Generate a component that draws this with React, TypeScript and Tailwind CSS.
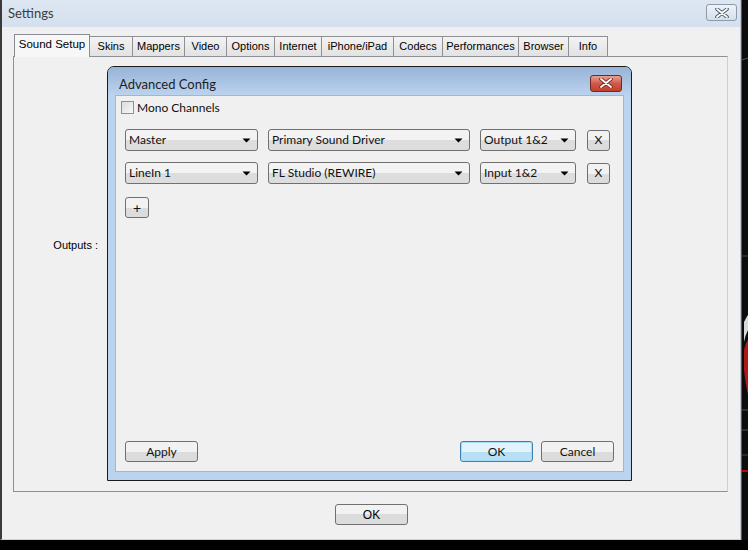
import React from "react";

const tahoma = { fontFamily: '"Liberation Sans", Arial, sans-serif' };
const segoe = { fontFamily: 'Lato, "Liberation Sans", sans-serif' };

const tabs: { label: string; w: string }[] = [
  { label: "Skins", w: "w-[43px]" },
  { label: "Mappers", w: "w-[52px]" },
  { label: "Video", w: "w-[42px]" },
  { label: "Options", w: "w-[48px]" },
  { label: "Internet", w: "w-[47px]" },
  { label: "iPhone/iPad", w: "w-[72px]" },
  { label: "Codecs", w: "w-[49px]" },
  { label: "Performances", w: "w-[76px]" },
  { label: "Browser", w: "w-[50px]" },
  { label: "Info", w: "w-[39px]" },
];

function Arrow() {
  return (
    <svg width="9" height="5" viewBox="0 0 9 5" className="shrink-0">
      <path d="M0.5 0.5 L8.5 0.5 L4.5 4.5 Z" fill="#000" />
    </svg>
  );
}

function Combo({ label, w }: { label: string; w: string }) {
  return (
    <div
      className={`${w} h-[22px] rounded-[3px] border border-[#707070] bg-gradient-to-b from-[#f3f3f3] from-50% to-[#dddddd] to-50% flex items-center pl-[3px] pr-[6px] text-[12px] text-[#111]`}
      style={segoe}
    >
      <span className="flex-1 leading-none">{label}</span>
      <Arrow />
    </div>
  );
}

function Btn({ label, className = "" }: { label: string; className?: string }) {
  return (
    <div
      className={`h-[21px] rounded-[3px] border border-[#707070] bg-gradient-to-b from-[#f2f2f2] from-50% to-[#dcdcdc] to-50% flex items-center justify-center text-[12px] text-[#111] ${className}`}
      style={segoe}
    >
      {label}
    </div>
  );
}

export default function App() {
  return (
    <div className="w-[748px] h-[550px] bg-black flex overflow-hidden">
      {/* Settings window */}
      <div className="w-[741px] h-[540px] shrink-0 border-l-2 border-l-[#3a3a3a] border-r border-r-[#bfc8d2] border-b border-b-[#c7d2de] bg-[#f0f0f0] flex flex-col">
        {/* Title bar */}
        <div className="h-[27px] shrink-0 bg-gradient-to-b from-[#dde7f2] to-[#d4e0ee] flex items-center pl-[6px] pr-[3px]">
          <span className="flex-1 text-[13px] text-[#3c3c3c] leading-none" style={segoe}>
            Settings
          </span>
          <div className="w-[31px] h-[17px] rounded-[3px] border border-[#8d99a8] bg-gradient-to-b from-[#eef3f9] to-[#d5dfeb] flex items-center justify-center -mt-[2px]">
            <svg width="14" height="10" viewBox="0 0 14 10">
              <path d="M2 1 L12 9 M12 1 L2 9" stroke="#4a5566" strokeWidth="3.6" strokeLinecap="round" />
              <path d="M2 1 L12 9 M12 1 L2 9" stroke="#ffffff" strokeWidth="1.8" strokeLinecap="round" />
            </svg>
          </div>
        </div>

        {/* Client */}
        <div className="flex-1 flex flex-col pl-[11px] pr-[12px] pt-[7px]">
          {/* Tab strip */}
          <div className="flex items-end h-[23px] pl-[1px] relative z-10" style={tahoma}>
            <div className="w-[76px] h-[23px] border border-[#898c95] border-b-0 bg-[#f7f7f7] flex items-center justify-center text-[11.5px] text-black pb-[2px]">
              Sound Setup
            </div>
            {tabs.map((t) => (
              <div
                key={t.label}
                className={`${t.w} h-[21px] border border-[#8e9096] border-l-0 bg-gradient-to-b from-[#f3f3f3] to-[#e2e2e2] flex items-center justify-center text-[11px] text-black`}
              >
                {t.label}
              </div>
            ))}
          </div>
          {/* Tab panel */}
          <div className="w-[715px] h-[436px] -mt-[1px] border border-[#8e9096] border-r-[#cfcfcf] bg-[#f0f0f0] relative flex">
            <div className="w-[84px] text-right pt-[180px] text-[11px] text-black" style={tahoma}>
              Outputs :
            </div>

            {/* Advanced Config dialog (floating window) */}
            <div className="absolute left-[93px] top-[9px] w-[525px] h-[415px] border border-[#1c1c1c] rounded-t-[7px] bg-[#bcd3ed] flex flex-col">
              <div className="h-[28px] shrink-0 rounded-t-[6px] bg-gradient-to-b from-[#97b3d6] to-[#bcd3ee] flex items-center pl-[11px] pr-[9px]">
                <span className="flex-1 text-[13px] text-[#1e1e1e] leading-none mt-[7px]" style={segoe}>
                  Advanced Config
                </span>
                <div className="w-[32px] h-[17px] rounded-[3px] border border-[#6d2a22] bg-gradient-to-b from-[#e8a093] via-[#d0594a] to-[#c2402f] flex items-center justify-center mt-[4px]">
                  <svg width="14" height="10" viewBox="0 0 14 10">
                    <path d="M2 1 L12 9 M12 1 L2 9" stroke="#7b2a20" strokeWidth="3.6" strokeLinecap="round" />
                    <path d="M2 1 L12 9 M12 1 L2 9" stroke="#ffffff" strokeWidth="1.8" strokeLinecap="round" />
                  </svg>
                </div>
              </div>
              <div className="flex-1 mx-[7px] mb-[8px] border border-[#9db7d4] bg-[#f0f0f0] flex flex-col px-[9px] pb-[9px]" style={segoe}>
                <div className="flex items-center gap-[3px] pt-[5px] -ml-[4px]">
                  <div className="w-[13px] h-[13px] border border-[#8e8f8f] bg-gradient-to-br from-[#dcdcdc] to-[#f8f8f8]" />
                  <span className="text-[12px] text-[#111] leading-none">Mono Channels</span>
                </div>
                <div className="flex items-center mt-[15px]">
                  <Combo label="Master" w="w-[133px]" />
                  <div className="w-[10px]" />
                  <Combo label="Primary Sound Driver" w="w-[202px]" />
                  <div className="w-[10px]" />
                  <Combo label="Output 1&2" w="w-[96px]" />
                  <div className="w-[11px]" />
                  <Btn label="X" className="w-[23px] text-[11px]" />
                </div>
                <div className="flex items-center mt-[11px]">
                  <Combo label="LineIn 1" w="w-[133px]" />
                  <div className="w-[10px]" />
                  <Combo label="FL Studio (REWIRE)" w="w-[202px]" />
                  <div className="w-[10px]" />
                  <Combo label="Input 1&2" w="w-[96px]" />
                  <div className="w-[11px]" />
                  <Btn label="X" className="w-[23px] text-[11px]" />
                </div>
                <div className="flex mt-[13px]">
                  <Btn label="+" className="w-[24px] text-[14px]" />
                </div>
                <div className="flex-1" />
                <div className="flex items-center">
                  <Btn label="Apply" className="w-[73px] h-[21px]" />
                  <div className="flex-1" />
                  <div className="w-[73px] h-[21px] rounded-[3px] border border-[#3c7fb1] bg-gradient-to-b from-[#e3f3fc] from-50% to-[#b7e0f7] to-50% flex items-center justify-center text-[12px] text-[#111] shadow-[inset_0_0_0_1px_#a8dcf6]">
                    OK
                  </div>
                  <div className="w-[8px]" />
                  <Btn label="Cancel" className="w-[73px] h-[21px]" />
                </div>
              </div>
            </div>
          </div>

          {/* Bottom OK */}
          <div className="flex justify-center pt-[12px]">
            <div
              className="w-[73px] h-[21px] rounded-[3px] border border-[#707070] bg-gradient-to-b from-[#f2f2f2] from-50% to-[#dcdcdc] to-50% flex items-center justify-center text-[12px] text-black ml-[2px]"
              style={tahoma}
            >
              OK
            </div>
          </div>
        </div>
      </div>

      {/* Background strip on the right */}
      <div className="flex-1 h-[540px] bg-[#0c0c0c] relative">
        <svg width="7" height="540" viewBox="0 0 7 540" className="absolute left-0 top-0">
          <rect x="0" y="0" width="1" height="540" fill="#5a5a5a" />
          <path d="M1 60 L7 58" stroke="#555" strokeWidth="1" />
          <path d="M1 256 L7 256" stroke="#444" strokeWidth="1" />
          <path d="M3 322 Q6 316 7 315 L7 330 Q4 336 3 342 Z" fill="#d8d8d8" />
          <path d="M3 350 Q5 342 7 340 L7 395 Q4 382 3 370 Z" fill="#b01818" />
          <path d="M1 410 L7 410" stroke="#555" />
          <path d="M1 430 L7 430" stroke="#555" />
          <path d="M1 455 L7 455" stroke="#444" />
          <rect x="1" y="470" width="6" height="2" fill="#c00" />
        </svg>
      </div>
    </div>
  );
}
